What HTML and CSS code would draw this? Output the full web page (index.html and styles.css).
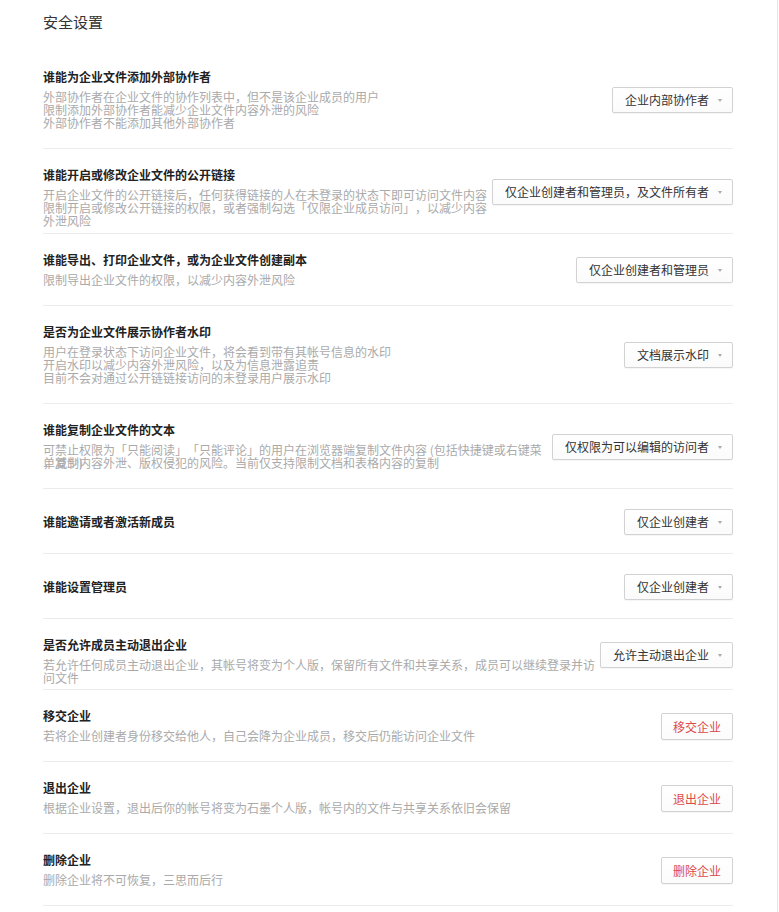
FILE: index.html
```html
<!DOCTYPE html>
<html lang="zh-CN">
<head>
    <meta charset="UTF-8">
    <meta name="viewport" content="width=device-width, initial-scale=1.0">
    <title>安全设置</title>
    <link rel="stylesheet" href="styles.css">
</head>
<body>
    <div class="page">
        <h1 class="page-title">安全设置</h1>

        <div class="setting-list">
            <div class="setting-item">
                <div class="setting-info">
                    <div class="setting-title">谁能为企业文件添加外部协作者</div>
                    <div class="setting-desc">
                        <p>外部协作者在企业文件的协作列表中，但不是该企业成员的用户</p>
                        <p>限制添加外部协作者能减少企业文件内容外泄的风险</p>
                        <p>外部协作者不能添加其他外部协作者</p>
                    </div>
                </div>
                <div class="dropdown">企业内部协作者<span class="caret"></span></div>
            </div>

            <div class="setting-item">
                <div class="setting-info">
                    <div class="setting-title">谁能开启或修改企业文件的公开链接</div>
                    <div class="setting-desc">
                        <p>开启企业文件的公开链接后，任何获得链接的人在未登录的状态下即可访问文件内容</p>
                        <p>限制开启或修改公开链接的权限，或者强制勾选「仅限企业成员访问」，以减少内容外泄风险</p>
                    </div>
                </div>
                <div class="dropdown">仅企业创建者和管理员，及文件所有者<span class="caret"></span></div>
            </div>

            <div class="setting-item">
                <div class="setting-info">
                    <div class="setting-title">谁能导出、打印企业文件，或为企业文件创建副本</div>
                    <div class="setting-desc">
                        <p>限制导出企业文件的权限，以减少内容外泄风险</p>
                    </div>
                </div>
                <div class="dropdown">仅企业创建者和管理员<span class="caret"></span></div>
            </div>

            <div class="setting-item">
                <div class="setting-info">
                    <div class="setting-title">是否为企业文件展示协作者水印</div>
                    <div class="setting-desc">
                        <p>用户在登录状态下访问企业文件，将会看到带有其帐号信息的水印</p>
                        <p>开启水印以减少内容外泄风险，以及为信息泄露追责</p>
                        <p>目前不会对通过公开链链接访问的未登录用户展示水印</p>
                    </div>
                </div>
                <div class="dropdown">文档展示水印<span class="caret"></span></div>
            </div>

            <div class="setting-item">
                <div class="setting-info">
                    <div class="setting-title">谁能复制企业文件的文本</div>
                    <div class="setting-desc">
                        <p>可禁止权限为「只能阅读」「只能评论」的用户在浏览器端复制文件内容 (包括快捷键或右键菜单复制)</p>
                        <p>，减少内容外泄、版权侵犯的风险。当前仅支持限制文档和表格内容的复制</p>
                    </div>
                </div>
                <div class="dropdown">仅权限为可以编辑的访问者<span class="caret"></span></div>
            </div>

            <div class="setting-item">
                <div class="setting-info">
                    <div class="setting-title">谁能邀请或者激活新成员</div>
                </div>
                <div class="dropdown">仅企业创建者<span class="caret"></span></div>
            </div>

            <div class="setting-item">
                <div class="setting-info">
                    <div class="setting-title">谁能设置管理员</div>
                </div>
                <div class="dropdown">仅企业创建者<span class="caret"></span></div>
            </div>

            <div class="setting-item item-tight">
                <div class="setting-info">
                    <div class="setting-title">是否允许成员主动退出企业</div>
                    <div class="setting-desc">
                        <p>若允许任何成员主动退出企业，其帐号将变为个人版，保留所有文件和共享关系，成员可以继续登录并访问文件</p>
                    </div>
                </div>
                <div class="dropdown">允许主动退出企业<span class="caret"></span></div>
            </div>

            <div class="setting-item">
                <div class="setting-info">
                    <div class="setting-title">移交企业</div>
                    <div class="setting-desc">
                        <p>若将企业创建者身份移交给他人，自己会降为企业成员，移交后仍能访问企业文件</p>
                    </div>
                </div>
                <button class="btn-danger">移交企业</button>
            </div>

            <div class="setting-item">
                <div class="setting-info">
                    <div class="setting-title">退出企业</div>
                    <div class="setting-desc">
                        <p>根据企业设置，退出后你的帐号将变为石墨个人版，帐号内的文件与共享关系依旧会保留</p>
                    </div>
                </div>
                <button class="btn-danger">退出企业</button>
            </div>

            <div class="setting-item">
                <div class="setting-info">
                    <div class="setting-title">删除企业</div>
                    <div class="setting-desc">
                        <p>删除企业将不可恢复，三思而后行</p>
                    </div>
                </div>
                <button class="btn-danger">删除企业</button>
            </div>
        </div>
    </div>
</body>
</html>
```

FILE: styles.css
```css
body {
    margin: 0;
    background: #fff;
    font-family: "Noto Sans CJK SC", "Liberation Sans", sans-serif;
    color: #333;
    text-spacing-trim: space-all;
}
.page {
    width: 690px;
    min-height: 912px;
    padding: 0 44px 0 43px;
    border-right: 1px solid #e4e4e4;
    box-sizing: content-box;
}
.page-title {
    margin: 0;
    padding: 12px 0 19px;
    font-size: 15px;
    font-weight: normal;
    line-height: 20px;
    color: #333;
}
.setting-item {
    display: flex;
    align-items: center;
    gap: 3px;
    padding: 20px 0 19px;
    border-bottom: 1px solid #ececec;
}
.item-tight {
    padding-bottom: 18px;
}
.setting-info {
    flex: 1;
    min-width: 0;
}
.setting-title {
    font-size: 12px;
    line-height: 12px;
    font-weight: bold;
    color: #222;
}
.setting-desc {
    margin-top: 7px;
    font-size: 12px;
    color: #aaa;
}
.setting-desc p {
    margin: 0;
    height: 13px;
    line-height: 13px;
}
.dropdown {
    flex-shrink: 0;
    display: flex;
    align-items: center;
    height: 24px;
    margin: -0.5px 0;
    padding: 0 10px 0 12px;
    border: 1px solid #d2d2d2;
    border-radius: 2px;
    background: linear-gradient(#fff, #fbfbfb);
    box-shadow: 0 1px 1px rgba(0,0,0,0.04);
    font-size: 12px;
    line-height: 24px;
    color: #333;
    white-space: nowrap;
}
.caret {
    width: 0;
    height: 0;
    margin-left: 9px;
    margin-top: 1px;
    border-left: 2.5px solid transparent;
    border-right: 2.5px solid transparent;
    border-top: 3px solid #aaa;
}
.btn-danger {
    flex-shrink: 0;
    height: 27px;
    padding: 0 11px;
    border: 1px solid #d2d2d2;
    border-radius: 2px;
    background: linear-gradient(#fff, #fbfbfb);
    box-shadow: 0 1px 1px rgba(0,0,0,0.04);
    font-family: inherit;
    font-size: 12px;
    color: #dc4a4a;
    cursor: pointer;
}
```
